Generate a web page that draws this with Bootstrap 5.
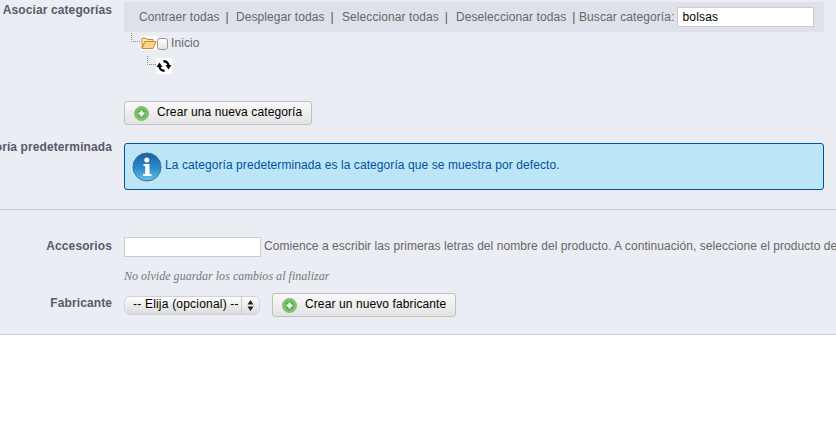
<!DOCTYPE html>
<html lang="es">
<head>
<meta charset="utf-8">
<title>Asociar categorías</title>
<link href="https://cdn.jsdelivr.net/npm/bootstrap@5.3.0/dist/css/bootstrap.min.css" rel="stylesheet">
<style>
html,body{height:446px;overflow:hidden;background:#fff;}
body{font-family:"Liberation Sans",Arial,sans-serif;font-size:12px;color:#000;line-height:15px;letter-spacing:.08px;}
.shell{background:#ebedf4;border-bottom:1px solid #ccced7;height:335px;padding-top:2px;overflow:hidden;}
.field-label{width:112px;flex:none;font-weight:700;color:#585a69;white-space:nowrap;justify-content:flex-end;display:flex;letter-spacing:.1px;}
.field-body{margin-left:12px;min-width:0;flex:none;}
.tool-strip{width:700px;height:30px;background:#dfe1ea;color:#666;padding-left:15px;white-space:nowrap;}
.tool-link{width:97px;flex:none;display:flex;}
.tool-sep{color:#555;margin-left:6px;}
.search-box{width:137px;height:20px;margin-left:3px;border:1px solid #ccc;background:#fff;padding:0 4px;font:12px "Liberation Sans",Arial,sans-serif;letter-spacing:.2px;color:#000;border-radius:0;}
.tree-box{height:69px;color:#666;}
.tree-row{display:flex;align-items:flex-start;}
.tick{width:11px;height:12px;margin:0;border:1px solid #9a9a9a;border-radius:3px;background:linear-gradient(#fff,#e4e4e4);appearance:none;flex:none;}
.grey-btn{display:inline-flex;align-items:center;height:24px;padding:0 9px 2px 9px;background:linear-gradient(#f9f9f9,#e3e3e3);border:1px solid #c0c0c0;border-radius:3px;color:#000;font-size:12px;line-height:15px;letter-spacing:.1px;}
.grey-btn:hover{background:#eee;border-color:#c0c0c0;color:#000;}
.info-box{width:700px;height:47px;background:#bde5f8;border:1px solid #00529b;border-radius:3px;color:#00529b;padding:0 0 2px 7px;margin:0;}
.sep-line{height:1px;background:#ccced7;margin:19px 0 27px;}
.ac-input{width:137px;height:20px;border:1px solid #ccc;background:#fff;border-radius:0;padding:0 4px;flex:none;}
.ac-hint{color:#666;white-space:nowrap;margin-left:3px;padding-bottom:2px;letter-spacing:.06px;}
.note-line{font-family:"Liberation Serif","Times New Roman",serif;font-style:italic;font-size:12px;letter-spacing:.03px;color:#777;line-height:14px;}
.pick-wrap{width:136px;height:19px;border-radius:6px;background:linear-gradient(#fdfdfd,#dcdcdc);border:1px solid #d2d2d2;}
.pick{width:117px;height:17px;border:0;background:transparent;appearance:none;font:12px "Liberation Sans",Arial,sans-serif;letter-spacing:.2px;color:#000;padding:0 0 2px 8px;border-right:1px solid #ccc;border-radius:0;}
.pick-caret{width:17px;display:flex;align-items:center;justify-content:center;}
</style>
</head>
<body>
<div class="shell">
  <div class="d-flex">
    <div class="field-label" style="padding-top:1px">Asociar categorías</div>
    <div class="field-body">
      <div class="tool-strip d-flex align-items-center">
        <span class="tool-link">Contraer todas<span class="tool-sep">|</span></span>
        <span class="tool-link" style="width:106px">Desplegar todas<span class="tool-sep">|</span></span>
        <span class="tool-link" style="width:114px">Seleccionar todas<span class="tool-sep">|</span></span>
        <span class="tool-link" style="width:123px">Deseleccionar todas<span class="tool-sep">|</span></span>
        <label for="cat-search" class="mb-0">Buscar categoría:</label>
        <input id="cat-search" class="search-box" type="text" value="bolsas">
      </div>
      <div class="tree-box">
        <div class="tree-row" style="height:26px">
          <svg width="10" height="18" viewBox="0 0 10 18" style="margin-left:7px;flex:none"><path d="M0.5 1V9.500H10" fill="none" stroke="#888" stroke-dasharray="1 1"/></svg>
          <svg width="16" height="14" viewBox="0 0 16 14" style="margin-top:4px;background:#fff;flex:none"><path d="M1 2h4l1 1.500h6v2H4L1 12z" fill="#fbe3b2" stroke="#c98a32"/><path d="M1 12.500 4 5.500h11l-3 7z" fill="#f9d487" stroke="#c98a32"/></svg>
          <input class="tick" type="checkbox" style="margin-top:6px" aria-label="Inicio">
          <span style="margin:4px 0 0 3px">Inicio</span>
        </div>
        <div class="tree-row">
          <svg width="32" height="18" viewBox="0 0 32 18" style="margin-top:-2px;flex:none"><path d="M23.500 0V8.500H32" fill="none" stroke="#888" stroke-dasharray="1 1"/></svg>
          <svg width="16" height="16" viewBox="0 0 16 16" style="background:#fff;flex:none"><path d="M7.500 3.200A4.800 4.800 0 0 1 12.500 7.500" fill="none" stroke="#000" stroke-width="2.400"/><path d="M9.500 7h6l-3 4.500z" fill="#000"/><path d="M8.500 12.800A4.800 4.800 0 0 1 3.500 8.500" fill="none" stroke="#000" stroke-width="2.400"/><path d="M.5 9h6l-3-4.500z" fill="#000"/></svg>
        </div>
      </div>
      <button type="button" class="btn grey-btn">
        <svg width="15" height="15" viewBox="0 0 15 15" style="margin:2px 8px 0 0"><circle cx="7.500" cy="7.500" r="7" fill="#7fc26b" stroke="#8fb489"/><circle cx="7.500" cy="7.500" r="4.500" fill="#5bb04e"/><path d="M7.500 4.500v6M4.500 7.500h6" stroke="#fff" stroke-width="2"/></svg>
        Crear una nueva categoría
      </button>
    </div>
  </div>

  <div class="d-flex" style="margin-top:18px">
    <div class="field-label" style="margin-top:-3px">Categoría predeterminada</div>
    <div class="field-body">
      <div class="info-box d-flex align-items-center">
        <svg width="30" height="30" viewBox="0 0 30 30" style="flex:none;margin:2px 3px 0 0">
          <defs>
            <linearGradient id="gi" x1="0" y1="0" x2="0" y2="1"><stop offset="0" stop-color="#1a6299"/><stop offset=".55" stop-color="#2a8ccb"/><stop offset="1" stop-color="#6cc3ee"/></linearGradient>
          </defs>
          <circle cx="15" cy="15" r="14" fill="url(#gi)" stroke="#3b6f93"/>
          <path d="M11.500 12h6v10h2v2h-8.500v-2h2.200v-8h-1.700z" fill="#fff"/><circle cx="14.800" cy="8" r="2.500" fill="#fff"/>
        </svg>
        <span>La categoría predeterminada es la categoría que se muestra por defecto.</span>
      </div>
    </div>
  </div>

  <div class="sep-line"></div>

  <div class="d-flex align-items-center" style="height:20px">
    <div class="field-label" style="padding-bottom:2px">Accesorios</div>
    <div class="field-body d-flex align-items-center">
      <input class="ac-input" type="text" aria-label="Accesorios">
      <span class="ac-hint">Comience a escribir las primeras letras del nombre del producto. A continuación, seleccione el producto de la lista desplegable.</span>
    </div>
  </div>
  <div class="note-line" style="margin:12px 0 0 124px">No olvide guardar los cambios al finalizar</div>
  <div class="d-flex align-items-center" style="margin-top:10px;height:24px">
    <div class="field-label" style="padding-bottom:3px">Fabricante</div>
    <div class="field-body d-flex align-items-center">
      <div class="pick-wrap d-flex">
        <select class="pick" aria-label="Fabricante"><option>-- Elija (opcional) --</option></select>
        <div class="pick-caret"><svg width="7" height="11" viewBox="0 0 7 11"><path d="M3.500 0 6.500 4.500H.5zM3.500 11 .5 6.500h6z" fill="#222"/></svg></div>
      </div>
      <button type="button" class="btn grey-btn" style="margin-left:12px">
        <svg width="15" height="15" viewBox="0 0 15 15" style="margin:2px 8px 0 0"><circle cx="7.500" cy="7.500" r="7" fill="#7fc26b" stroke="#8fb489"/><circle cx="7.500" cy="7.500" r="4.500" fill="#5bb04e"/><path d="M7.500 4.500v6M4.500 7.500h6" stroke="#fff" stroke-width="2"/></svg>
        Crear un nuevo fabricante
      </button>
    </div>
  </div>
</div>
<script src="https://cdn.jsdelivr.net/npm/bootstrap@5.3.0/dist/js/bootstrap.bundle.min.js"></script>
</body>
</html>
